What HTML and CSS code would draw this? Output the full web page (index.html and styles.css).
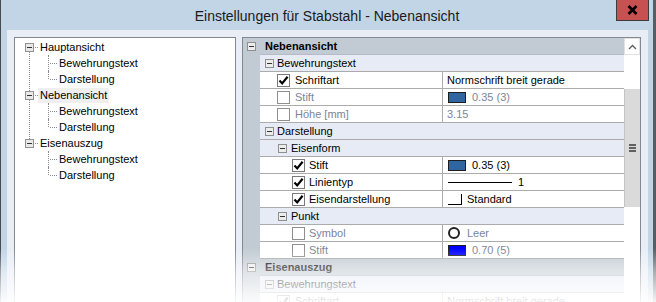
FILE: index.html
```html
<!DOCTYPE html>
<html lang="de">
<head>
    <meta charset="UTF-8">
    <title>Einstellungen für Stabstahl - Nebenansicht</title>
    <link rel="stylesheet" href="styles.css">
</head>
<body>
<div class="window">
    <header class="titlebar">
        <span></span>
        <h1 class="title">Einstellungen für Stabstahl - Nebenansicht</h1>
        <button class="close" type="button">
            <svg width="11" height="10" viewBox="0 0 11 10"><path d="M1.5 1 L9.5 9 M9.5 1 L1.5 9" stroke="#000" stroke-width="2.6"/></svg>
        </button>
    </header>

    <div class="client">
        <ul class="tree">
            <li>
                <div class="label"><i class="toggle"></i><span>Hauptansicht</span></div>
                <ul>
                    <li><div class="label"><span>Bewehrungstext</span></div></li>
                    <li><div class="label"><span>Darstellung</span></div></li>
                </ul>
            </li>
            <li>
                <div class="label selected"><i class="toggle"></i><span>Nebenansicht</span></div>
                <ul>
                    <li><div class="label"><span>Bewehrungstext</span></div></li>
                    <li><div class="label"><span>Darstellung</span></div></li>
                </ul>
            </li>
            <li>
                <div class="label"><i class="toggle"></i><span>Eisenauszug</span></div>
                <ul>
                    <li><div class="label"><span>Bewehrungstext</span></div></li>
                    <li><div class="label"><span>Darstellung</span></div></li>
                </ul>
            </li>
        </ul>

        <div class="grid">
            <div class="rows">
                <div class="row cat0"><span class="gutter"><i class="minus"></i></span><span class="main">Nebenansicht</span></div>
                <div class="row cat1"><span class="gutter"></span><span class="main"><i class="minus"></i>Bewehrungstext</span></div>
                <div class="row prop">
                    <span class="gutter"></span>
                    <span class="main">
                        <span class="name"><i class="check"><svg width="11" height="11" viewBox="0 0 11 11"><path d="M1.5 5.5 L4.2 8.4 L9.6 1.8" fill="none" stroke="#000" stroke-width="2.2"/></svg></i>Schriftart</span>
                        <span class="value">Normschrift breit gerade</span>
                    </span>
                </div>
                <div class="row prop off">
                    <span class="gutter"></span>
                    <span class="main">
                        <span class="name"><i class="check"></i>Stift</span>
                        <span class="value"><i class="swatch"></i>0.35 (3)</span>
                    </span>
                </div>
                <div class="row prop off">
                    <span class="gutter"></span>
                    <span class="main">
                        <span class="name"><i class="check"></i>Höhe [mm]</span>
                        <span class="value">3.15</span>
                    </span>
                </div>
                <div class="row cat1"><span class="gutter"></span><span class="main"><i class="minus"></i>Darstellung</span></div>
                <div class="row cat2"><span class="gutter"></span><span class="main"><i class="minus"></i>Eisenform</span></div>
                <div class="row prop l2">
                    <span class="gutter"></span>
                    <span class="main">
                        <span class="name"><i class="check"><svg width="11" height="11" viewBox="0 0 11 11"><path d="M1.5 5.5 L4.2 8.4 L9.6 1.8" fill="none" stroke="#000" stroke-width="2.2"/></svg></i>Stift</span>
                        <span class="value"><i class="swatch"></i>0.35 (3)</span>
                    </span>
                </div>
                <div class="row prop l2">
                    <span class="gutter"></span>
                    <span class="main">
                        <span class="name"><i class="check"><svg width="11" height="11" viewBox="0 0 11 11"><path d="M1.5 5.5 L4.2 8.4 L9.6 1.8" fill="none" stroke="#000" stroke-width="2.2"/></svg></i>Linientyp</span>
                        <span class="value"><i class="line"></i>1</span>
                    </span>
                </div>
                <div class="row prop l2">
                    <span class="gutter"></span>
                    <span class="main">
                        <span class="name"><i class="check"><svg width="11" height="11" viewBox="0 0 11 11"><path d="M1.5 5.5 L4.2 8.4 L9.6 1.8" fill="none" stroke="#000" stroke-width="2.2"/></svg></i>Eisendarstellung</span>
                        <span class="value"><i class="corner"></i>Standard</span>
                    </span>
                </div>
                <div class="row cat2"><span class="gutter"></span><span class="main"><i class="minus"></i>Punkt</span></div>
                <div class="row prop l2 off">
                    <span class="gutter"></span>
                    <span class="main">
                        <span class="name"><i class="check"></i>Symbol</span>
                        <span class="value"><i class="circle"></i>Leer</span>
                    </span>
                </div>
                <div class="row prop l2 off">
                    <span class="gutter"></span>
                    <span class="main">
                        <span class="name"><i class="check"></i>Stift</span>
                        <span class="value"><i class="swatch blue"></i>0.70 (5)</span>
                    </span>
                </div>
                <div class="row cat0"><span class="gutter"><i class="minus"></i></span><span class="main">Eisenauszug</span></div>
                <div class="row cat1"><span class="gutter"></span><span class="main"><i class="minus"></i>Bewehrungstext</span></div>
                <div class="row prop">
                    <span class="gutter"></span>
                    <span class="main">
                        <span class="name"><i class="check"><svg width="11" height="11" viewBox="0 0 11 11"><path d="M1.5 5.5 L4.2 8.4 L9.6 1.8" fill="none" stroke="#000" stroke-width="2.2"/></svg></i>Schriftart</span>
                        <span class="value">Normschrift breit gerade</span>
                    </span>
                </div>
            </div>

            <div class="scrollbar">
                <div class="up"><svg width="9" height="6" viewBox="0 0 9 6"><path d="M1 5 L4.5 1.5 L8 5" fill="none" stroke="#606060" stroke-width="1.4"/></svg></div>
                <div class="track-top"></div>
                <div class="thumb"><i></i><i></i><i></i></div>
            </div>
        </div>
    </div>

    <div class="fade"></div>
</div>
</body>
</html>
```

FILE: styles.css
```css
* {
    box-sizing: border-box;
    margin: 0;
    padding: 0;
}

body {
    width: 656px;
    height: 302px;
    overflow: hidden;
    font-family: 'Liberation Sans', Arial, sans-serif;
    font-size: 11px;
    color: #000;
    background: #fff;
}

.window {
    position: relative;
    height: 302px;
    display: flex;
    flex-direction: column;
    background: #c1d5e7;
    border-left: 1px solid #464b52;
    border-right: 3px solid #585d64;
}

/* title bar */

.titlebar {
    height: 30px;
    flex: none;
    display: grid;
    grid-template-columns: 1fr auto 1fr;
    align-items: center;
}

.title {
    font-size: 14px;
    font-weight: normal;
    color: #1a1a1a;
    padding-top: 1px;
}

.close {
    justify-self: end;
    align-self: start;
    width: 33px;
    height: 21px;
    margin-right: 4px;
    background: #c75050;
    border: 1px solid #3c3c3c;
    border-top: none;
    display: flex;
    align-items: center;
    justify-content: center;
}

/* client area */

.client {
    flex: 1;
    display: flex;
    gap: 6px;
    margin: 0 5px 0 6px;
    padding: 7px 7px 0 7px;
    background: #e8edf6;
}

/* tree */

.tree {
    list-style: none;
    width: 222px;
    flex: none;
    padding-top: 1px;
    border: 1px solid #828790;
    background: #fff;
}

.tree ul {
    list-style: none;
}

.tree li {
    position: relative;
}

.label {
    position: relative;
    height: 16px;
    display: flex;
    align-items: center;
    padding-left: 10px;
}

.tree ul .label {
    padding-left: 44px;
}

.toggle {
    width: 9px;
    height: 9px;
    margin-right: 6px;
    border: 1px solid #919191;
    background: linear-gradient(#333, #333) center / 5px 1px no-repeat, #e9e9e9;
}

.label.selected span {
    background: #efefef;
    margin-left: -2px;
    padding: 0 2px;
    line-height: 15px;
}

/* dotted connectors */

.tree > li::before {
    content: "";
    position: absolute;
    left: 14px;
    top: 13px;
    bottom: -4px;
    border-left: 1px dotted #8a8a8a;
}

.tree > li:last-child::before {
    display: none;
}

.tree > li > .label::after {
    content: "";
    position: absolute;
    left: 20px;
    top: 8px;
    width: 3px;
    border-top: 1px dotted #8a8a8a;
}

.tree ul li::before {
    content: "";
    position: absolute;
    left: 33px;
    top: 0;
    bottom: 0;
    border-left: 1px dotted #8a8a8a;
}

.tree ul li:last-child::before {
    bottom: auto;
    height: 8px;
}

.tree ul .label::after {
    content: "";
    position: absolute;
    left: 35px;
    top: 8px;
    width: 7px;
    border-top: 1px dotted #8a8a8a;
}

/* property grid */

.grid {
    flex: 1;
    display: flex;
    border: 1px solid #828790;
    border-bottom: none;
    background: #fff;
}

.rows {
    flex: 1;
    display: flex;
    flex-direction: column;
}

.row {
    display: flex;
    height: 17px;
    flex: none;
}

.gutter {
    width: 17px;
    flex: none;
    display: flex;
    align-items: center;
    justify-content: center;
    background: #c2cbd3;
}

.main {
    flex: 1;
    display: flex;
    align-items: center;
    border-bottom: 1px solid #ababab;
}

.minus {
    width: 9px;
    height: 9px;
    flex: none;
    border: 1px solid #8e8f8f;
    background: linear-gradient(#333, #333) center / 5px 1px no-repeat, #ececec;
}

.cat0 .main {
    background: #c2cbd3;
    font-weight: bold;
    padding-left: 5px;
    border-bottom-color: #b3bcc4;
}

.cat1 .main, .cat2 .main {
    background: #e6ebf5;
    padding-left: 5px;
    gap: 3px;
}

.cat2 .main {
    padding-left: 18px;
    gap: 4px;
}

.prop .main {
    align-items: stretch;
}

.name {
    width: 183px;
    flex: none;
    display: flex;
    align-items: center;
    gap: 5px;
    padding-left: 17px;
    border-right: 1px solid #ababab;
}

.l2 .name {
    padding-left: 32px;
    gap: 4px;
}

.value {
    flex: 1;
    display: flex;
    align-items: center;
    gap: 6px;
    padding-left: 4px;
}

.off .name, .off .value {
    color: #7b8595;
}

.check {
    width: 13px;
    height: 13px;
    flex: none;
    display: flex;
    align-items: center;
    justify-content: center;
    border: 1px solid #7a7a7a;
    background: #fff;
}

.off .check {
    border-color: #8f8f8f;
}

.swatch {
    width: 18px;
    height: 11px;
    margin-left: 1px;
    border: 1px solid #1e1e1e;
    background: #30669f;
}

.swatch.blue {
    background: #0000ff;
}

.line {
    width: 64px;
    height: 1px;
    margin-left: 1px;
    background: #000;
}

.corner {
    width: 14px;
    height: 11px;
    margin: 0 -1px 0 1px;
    border-right: 1px solid #000;
    border-bottom: 1px solid #000;
}

.circle {
    width: 12px;
    height: 12px;
    margin: 0 1px 0 1px;
    border: 2px solid #222;
    border-radius: 50%;
}

/* scrollbar */

.scrollbar {
    width: 16px;
    flex: none;
    display: flex;
    flex-direction: column;
    background: #fff;
}

.up {
    height: 17px;
    display: flex;
    align-items: center;
    justify-content: center;
    border: 1px solid #e2e2e2;
}

.track-top {
    height: 34px;
}

.thumb {
    height: 118px;
    display: flex;
    flex-direction: column;
    align-items: center;
    justify-content: center;
    gap: 1px;
    background: #dadada;
    border-left: 1px solid #c4c4c4;
}

.thumb i {
    width: 7px;
    height: 2px;
    background: #606060;
}

/* bottom fade of the screenshot */

.fade {
    position: absolute;
    left: -1px;
    right: -3px;
    bottom: 0;
    height: 54px;
    background: linear-gradient(rgba(255, 255, 255, 0), rgba(255, 255, 255, 0.5) 45%, rgba(255, 255, 255, 0.93));
    pointer-events: none;
}
```
